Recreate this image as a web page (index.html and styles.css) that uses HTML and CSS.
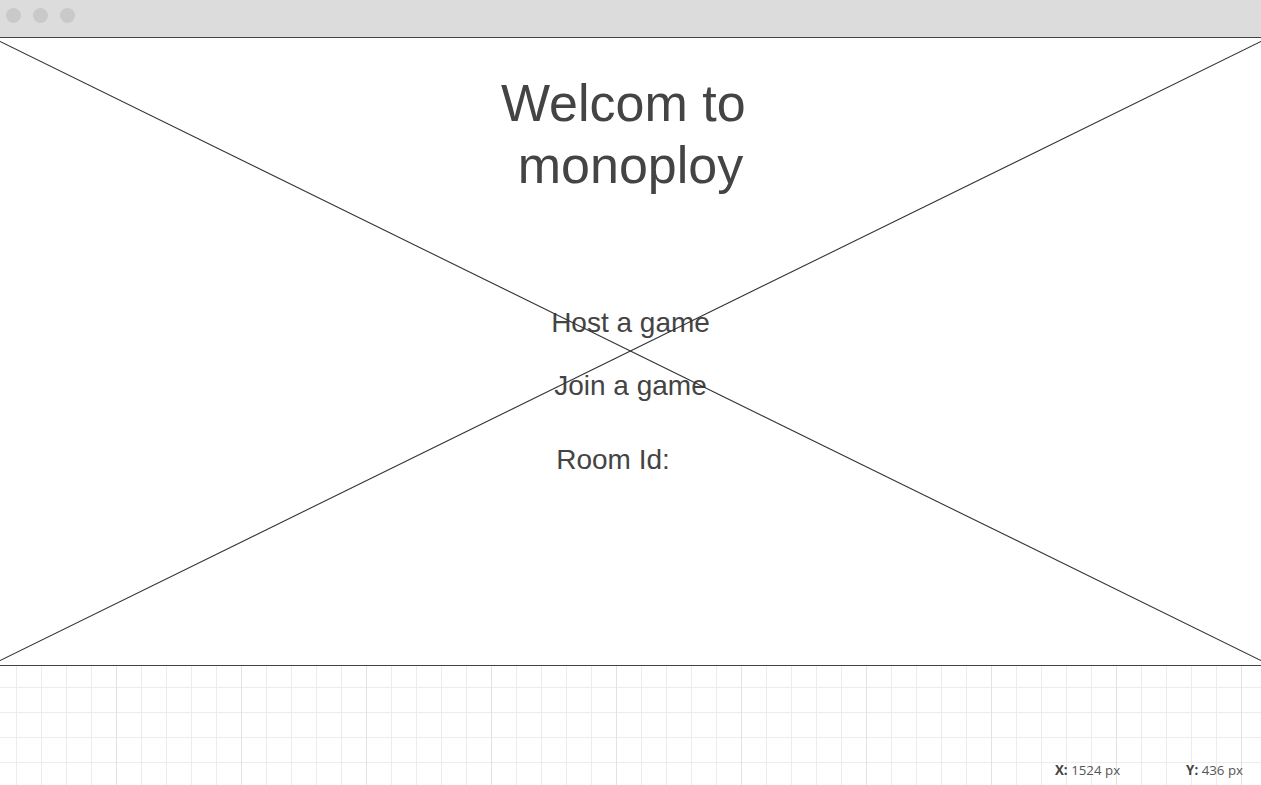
FILE: index.html
```html
<!DOCTYPE html>
<html lang="en">
<head>
<meta charset="utf-8">
<title>Welcom to monoploy</title>
<link rel="stylesheet" href="styles.css">
</head>
<body>
  <div class="window">
    <header class="topbar">
      <span class="dot"></span>
      <span class="dot"></span>
      <span class="dot"></span>
    </header>
    <main class="canvas">
      <svg class="cross" viewBox="0 0 1261 627" preserveAspectRatio="none" aria-hidden="true">
        <line x1="0" y1="3.5" x2="1261" y2="622.5" />
        <line x1="1261" y1="3.5" x2="0" y2="622.5" />
      </svg>
      <h1 class="title">Welcom to <br>monoploy</h1>
      <div class="menu">
        <div class="menu-item">Host a game</div>
        <div class="menu-item">Join a game</div>
        <div class="room-row">
          <span class="room-label">Room Id:</span>
          <span class="room-input"></span>
        </div>
      </div>
    </main>
    <footer class="grid">
      <div class="coords">
        <span class="coord"><b>X:</b> 1524 px</span>
        <span class="coord"><b>Y:</b> 436 px</span>
      </div>
    </footer>
  </div>
</body>
</html>
```
FILE: styles.css
```css
html, body {
  margin: 0;
  padding: 0;
  background: #ffffff;
}

.window {
  width: 1261px;
  height: 785px;
  display: flex;
  flex-direction: column;
  overflow: hidden;
}

.topbar {
  box-sizing: border-box;
  height: 38px;
  flex: 0 0 38px;
  background: #dcdcdc;
  border-bottom: 1px solid #444444;
  display: flex;
  align-items: flex-start;
  gap: 12px;
  padding: 8px 0 0 6px;
}

.dot {
  width: 15px;
  height: 15px;
  border-radius: 50%;
  background: #c9c9c9;
}

.canvas {
  position: relative;
  box-sizing: border-box;
  height: 628px;
  flex: 0 0 628px;
  border-bottom: 1px solid #444444;
  display: flex;
  flex-direction: column;
  align-items: center;
  padding-top: 34px;
  font-family: "Liberation Sans", Arial, sans-serif;
  color: #444444;
}

.cross {
  position: absolute;
  left: 0;
  top: 0;
  width: 1261px;
  height: 627px;
  pointer-events: none;
}

.cross line {
  stroke: #333333;
  stroke-width: 1.1;
}

.title {
  margin: 0;
  font-weight: normal;
  font-size: 52px;
  line-height: 62px;
  text-align: center;
  white-space: pre-wrap;
}

.menu {
  margin-top: 111px;
  display: flex;
  flex-direction: column;
  align-items: center;
  font-size: 28px;
  line-height: 32px;
}

.menu-item {
  text-align: center;
}

.menu-item + .menu-item {
  margin-top: 31px;
}

.room-row {
  margin-top: 42px;
  display: flex;
  align-items: center;
}

.room-input {
  width: 35px;
  height: 32px;
}

.grid {
  flex: 1 1 auto;
  position: relative;
  background-color: #ffffff;
  background-image:
    linear-gradient(to right, #e2e2e2 1px, transparent 1px),
    linear-gradient(to right, #ececec 1px, transparent 1px),
    linear-gradient(to bottom, #ececec 1px, transparent 1px);
  background-size: 125px 100%, 25px 25px, 25px 25px;
  background-position: 116px 0, 16px 0, 0 21px;
  display: flex;
  justify-content: flex-end;
  align-items: flex-end;
}

.coords {
  display: flex;
  gap: 66px;
  padding: 0 18px 7px 0;
  font-family: "Open Sans", "Noto Sans", sans-serif;
  font-size: 13.3px;
  line-height: 16px;
  color: #555555;
}

.coord b {
  font-weight: bold;
  color: #444444;
}
```
